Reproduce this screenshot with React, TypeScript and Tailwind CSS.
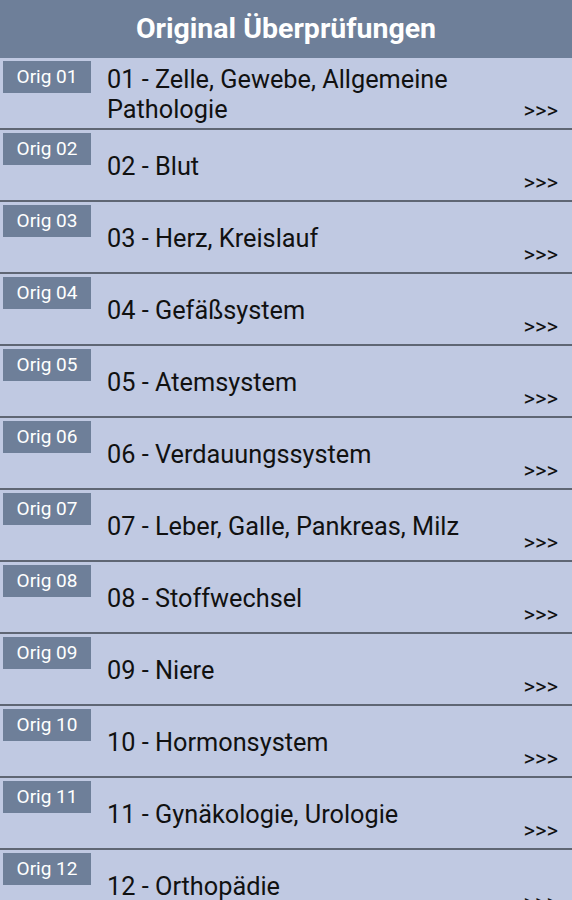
const ITEMS = [
  { tag: "Orig 01", title: "01 - Zelle, Gewebe, Allgemeine Pathologie" },
  { tag: "Orig 02", title: "02 - Blut" },
  { tag: "Orig 03", title: "03 - Herz, Kreislauf" },
  { tag: "Orig 04", title: "04 - Gefäßsystem" },
  { tag: "Orig 05", title: "05 - Atemsystem" },
  { tag: "Orig 06", title: "06 - Verdauungssystem" },
  { tag: "Orig 07", title: "07 - Leber, Galle, Pankreas, Milz" },
  { tag: "Orig 08", title: "08 - Stoffwechsel" },
  { tag: "Orig 09", title: "09 - Niere" },
  { tag: "Orig 10", title: "10 - Hormonsystem" },
  { tag: "Orig 11", title: "11 - Gynäkologie, Urologie" },
  { tag: "Orig 12", title: "12 - Orthopädie" },
];

function Row({ tag, title }: { tag: string; title: string }) {
  return (
    <div className="flex h-[72px] border-b-2 border-[#5f6674] bg-[#c0c9e2]">
      <div className="ml-[3px] mt-[3px] flex h-[32px] w-[88px] shrink-0 items-center justify-center bg-[#6e7f99] text-[19px] text-white">
        {tag}
      </div>
      <div className="ml-[16px] flex flex-1 items-center pr-2 pt-[3px] text-[25.3px] leading-[30px] text-[#111]">
        {title}
      </div>
      <div className="flex items-end pb-[4px] pr-[14px] text-[22px] leading-[26px] text-[#111]">&gt;&gt;&gt;</div>
    </div>
  );
}

export default function App() {
  return (
    <div className="min-h-screen bg-[#c0c9e2] font-['Roboto',sans-serif]">
      <div className="flex h-[58px] items-center justify-center bg-[#6e7f99] text-[28.5px] font-bold text-white">
        Original Überprüfungen
      </div>
      {ITEMS.map((it) => (
        <Row key={it.tag} {...it} />
      ))}
    </div>
  );
}
